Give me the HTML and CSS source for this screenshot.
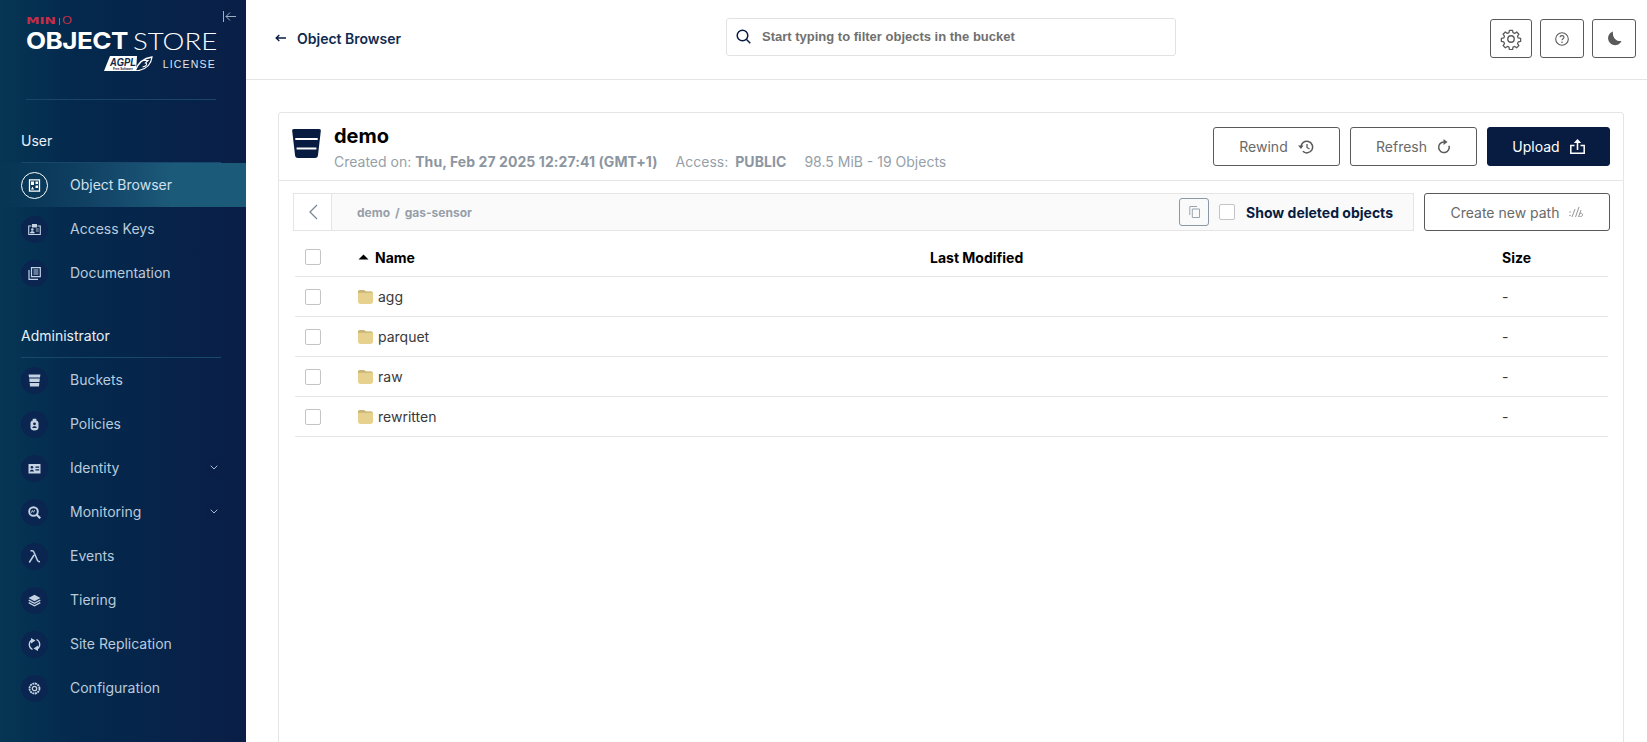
FILE: index.html
```html
<!DOCTYPE html>
<html lang="en">
<head>
<meta charset="utf-8">
<title>MinIO Object Store</title>
<link rel="stylesheet" href="styles.css">
</head>
<body>
<div class="app">
  <aside class="sidebar">
    <div class="brand">
      <svg class="collapse" viewBox="0 0 13 11" width="13" height="11"><path d="M.5 0v11M13 5.500H3M7 1.500l-4 4 4 4" fill="none" stroke="#9fb0c4" stroke-width="1"/></svg>
      <div class="minio"><b>MIN</b><span class="bar"></span><i>O</i></div>
      <div class="product"><b>OBJECT</b><span>STORE</span></div>
      <div class="license">
        <svg class="agpl" viewBox="0 0 49 15" width="49" height="15"><path d="M6 0h27l-1 15H0z" fill="#fff"/><text x="6" y="10" font-family="Liberation Sans" font-size="11.500" font-style="italic" font-weight="700" fill="#0b2547" textLength="26" lengthAdjust="spacingAndGlyphs">AGPL</text><text x="9" y="14" font-family="Liberation Sans" font-size="3" font-weight="700" fill="#0b2547">Free Software</text><path d="M31 15C34 7 40 2 48 1c-1 8-6 13-17 14z" fill="#0b2547" stroke="#fff" stroke-width="1.300"/><path d="M39 4.500h5l-2.500 2.500c2 .5 1.500 3.500-3 4" fill="none" stroke="#fff" stroke-width="1.100"/></svg>
        <span class="lic">LICENSE</span>
      </div>
    </div>
    <div class="section">User</div>
    <nav class="menu">
      <a class="item active"><span class="ic"><svg viewBox="0 0 13 13"><path d="M1.500 .8h10v11.400h-10z" fill="none" stroke="currentColor" stroke-width="1.300"/><path d="M3 2.500h3v3.500H3zM7.500 2.500h2.500V5H7.500zM7.500 6.500h2.500V9H7.500zM3 10.500l1.500-3 1.500 3z" fill="currentColor"/></svg></span>Object Browser</a>
      <a class="item"><span class="ic"><svg viewBox="0 0 13 13"><path d="M3.500 3H.7v8.500h11.600V3H9.500" fill="none" stroke="currentColor" stroke-width="1.100"/><path d="M4 1h5v3.500H4z" fill="currentColor"/><circle cx="4.300" cy="6.500" r="1.300" fill="currentColor"/><path d="M2.300 10c.2-2 3.800-2 4 0zM7.800 6h3M7.800 8h3" fill="currentColor" stroke="currentColor" stroke-width=".8"/></svg></span>Access Keys</a>
      <a class="item"><span class="ic"><svg viewBox="0 0 13 13"><path d="M3.500 .7h8.800v9H3.500z" fill="none" stroke="currentColor" stroke-width="1.200"/><path d="M1 3v9.300h9" fill="none" stroke="currentColor" stroke-width="1.200"/><path d="M5.500 3h4.800M5.500 5h4.800M5.500 7h4.800" stroke="currentColor"/></svg></span>Documentation</a>
    </nav>
    <div class="section">Administrator</div>
    <nav class="menu">
      <a class="item"><span class="ic"><svg viewBox="0 0 13 13"><path d="M.6 .5h11.800l-.4 3H1zM1.200 4.500h10.600l-.3 3.500H1.500zM1.700 9h9.600l-.3 3.500H2z" fill="currentColor"/></svg></span>Buckets</a>
      <a class="item"><span class="ic"><svg viewBox="0 0 13 13"><path d="M4.700 2.500V.8h3.600v1.700c1.500.3 2.200 1.200 2.200 2.700V9.500c0 2-1.500 3-4 3s-4-1-4-3V5.200c0-1.500.7-2.400 2.200-2.700z" fill="currentColor"/><circle cx="6.500" cy="5.800" r="1.400" fill="#0a2550"/><path d="M4.200 10c.3-2.200 4.300-2.200 4.600 0z" fill="#0a2550"/></svg></span>Policies</a>
      <a class="item"><span class="ic"><svg viewBox="0 0 13 13"><path d="M.5 2h12v9.500H.5z" fill="currentColor"/><circle cx="3.900" cy="5.300" r="1.300" fill="#0a2550"/><path d="M1.800 9.500c.2-2.300 4-2.300 4.200 0zM7.500 4.500h3.700v1.200H7.500zM7.500 7.200h3.700v1.200H7.500z" fill="#0a2550"/></svg></span>Identity<span class="chev"><svg viewBox="0 0 8 5" width="8" height="5"><path d="M.7.700L4 4 7.300.7" fill="none" stroke="#a9bbd0" stroke-width="1"/></svg></span></a>
      <a class="item"><span class="ic"><svg viewBox="0 0 13 13"><circle cx="5.500" cy="5.500" r="4.300" fill="none" stroke="currentColor" stroke-width="1.900"/><path d="M8.500 8.500l3.800 3.800" stroke="currentColor" stroke-width="2.200"/><path d="M3.200 6.800l1.200-2.300 1.100 1.800 1.200-2.300" fill="none" stroke="currentColor" stroke-width=".9"/></svg></span>Monitoring<span class="chev"><svg viewBox="0 0 8 5" width="8" height="5"><path d="M.7.700L4 4 7.300.7" fill="none" stroke="#a9bbd0" stroke-width="1"/></svg></span></a>
      <a class="item"><span class="ic"><svg viewBox="0 0 13 13"><path d="M2.500 .8H4c1.200 0 1.700.6 2.100 1.700L9.500 10.500c.3.700.8 1.200 2.500 1.200M6 5L1.300 12.500" fill="none" stroke="currentColor" stroke-width="1.500"/></svg></span>Events</a>
      <a class="item"><span class="ic"><svg viewBox="0 0 13 13"><path d="M6.500.8l6 3.200-6 3.200-6-3.200z" fill="currentColor"/><path d="M.7 6.100l5.800 3.100 5.800-3.100M.7 8.600l5.800 3.100 5.800-3.100" fill="none" stroke="currentColor" stroke-width="1.300"/></svg></span>Tiering</a>
      <a class="item"><span class="ic"><svg viewBox="0 0 13 13"><path d="M4.500 11.500A5.400 5.400 0 0 1 3.500 2.200M8.500 1.500A5.400 5.400 0 0 1 9.500 10.800" fill="none" stroke="currentColor" stroke-width="1.300"/><path d="M3 0l4.500 2.500L3 5.500zM10 13l-4.500-2.500L10 7.500z" fill="currentColor"/></svg></span>Site Replication</a>
      <a class="item"><span class="ic"><svg viewBox="0 0 13 13"><circle cx="6.500" cy="6.500" r="5" fill="none" stroke="currentColor" stroke-width="1.800" stroke-dasharray="2 .6"/><circle cx="6.500" cy="6.500" r="2.200" fill="none" stroke="currentColor" stroke-width="1.300"/></svg></span>Configuration</a>
    </nav>
  </aside>

  <main class="main">
    <header class="topbar">
      <a class="back"><svg viewBox="0 0 11 8" width="11" height="8"><path d="M11 4H1.500M4.300 1L1.200 4l3.100 3" fill="none" stroke="#081c42" stroke-width="1.400"/></svg><span>Object Browser</span></a>
      <div class="search">
        <svg viewBox="0 0 15 15" width="15" height="15"><circle cx="6.500" cy="6.500" r="5.300" fill="none" stroke="#081c42" stroke-width="1.500"/><path d="M10.300 10.300l4 4" stroke="#081c42" stroke-width="1.500"/></svg>
        <span>Start typing to filter objects in the bucket</span>
      </div>
      <div class="tools">
        <button class="tool gear"><svg viewBox="0 0 24 24" width="22" height="22"><path d="M10.300 2.500h3.400l.5 2.600 1.800.8 2.200-1.500 2.400 2.400-1.500 2.200.8 1.800 2.600.5v3.400l-2.600.5-.8 1.800 1.500 2.200-2.400 2.400-2.200-1.500-1.800.8-.5 2.600h-3.400l-.5-2.600-1.800-.8-2.200 1.500-2.400-2.400 1.500-2.200-.8-1.800-2.600-.5v-3.400l2.600-.5.800-1.800-1.500-2.200 2.400-2.400 2.200 1.500 1.800-.8z" fill="none" stroke="#5a5a5a" stroke-width="1.400" stroke-linejoin="round"/><circle cx="12" cy="12" r="3.500" fill="none" stroke="#5a5a5a" stroke-width="1.500"/></svg></button>
        <button class="tool help"><svg viewBox="0 0 14 14" width="14" height="14"><circle cx="7" cy="7" r="6.300" fill="none" stroke="#5a5a5a" stroke-width="1.100"/><path d="M5 5.300C5 3 9 3 9 5.300c0 1.500-2 1.500-2 3" fill="none" stroke="#5a5a5a" stroke-width="1.100"/><circle cx="7" cy="10.200" r=".8" fill="#5a5a5a"/></svg></button>
        <button class="tool moon"><svg viewBox="0 0 15 15" width="15" height="15"><path d="M6 .5A7 7 0 1 0 14.500 10C10 10.800 5 7 6 .5z" fill="#5a5a5a"/></svg></button>
      </div>
    </header>

    <div class="content">
      <section class="bucket">
        <svg class="bucket-ic" viewBox="0 0 29 29" width="29" height="29"><path d="M2 0h25c1.500 0 2 .8 1.800 2L26 26c-.2 1.800-1 3-3 3H6c-2 0-2.800-1.200-3-3L.2 2C0 .8.500 0 2 0z" fill="#081c42"/><path d="M3.300 9h22.400v2H3.300zM4.600 18.500h19.800v2H4.600z" fill="#fff"/></svg>
        <div class="bucket-info">
          <h1>demo</h1>
          <p><span>Created on: <b>Thu, Feb 27 2025 12:27:41 (GMT+1)</b></span><span class="acc">Access: <b>PUBLIC</b></span><span class="size">98.5 MiB - 19 Objects</span></p>
        </div>
        <div class="actions">
          <button class="btn">Rewind<svg viewBox="0 0 16 14" width="16" height="14"><path d="M3 7a5.800 5.800 0 1 1 1.800 4.300" fill="none" stroke="#5a5a5a" stroke-width="1.500"/><path d="M0 5.500h5.500L3 9z" fill="#5a5a5a"/><path d="M9 4v3.500l2.500 1.500" fill="none" stroke="#5a5a5a" stroke-width="1.300"/></svg></button>
          <button class="btn">Refresh<svg viewBox="0 0 14 15" width="14" height="15"><path d="M12 6.700A5.300 5.300 0 1 1 6.800 3" fill="none" stroke="#5a5a5a" stroke-width="1.500"/><path d="M6.500 0l4 3-4 3z" fill="#5a5a5a"/></svg></button>
          <button class="btn primary">Upload<svg viewBox="0 0 15 15" width="15" height="15"><path d="M4.500 6.500H.8v7.700h13.400V6.500h-3.700" fill="none" stroke="#fff" stroke-width="1.500"/><path d="M7.500 2v9" stroke="#fff" stroke-width="1.600"/><path d="M7.500 0L3.800 4h7.400z" fill="#fff"/></svg></button>
        </div>
      </section>

      <section class="browser">
        <div class="pathbar">
          <div class="crumbs">
            <span class="crumb-back"><svg viewBox="0 0 10 16" width="10" height="16"><path d="M9 1L2 8l7 7" fill="none" stroke="#7c8794" stroke-width="1.300"/></svg></span>
            <span class="crumb-text">demo<i>/</i>gas-sensor</span>
            <button class="copy"><svg viewBox="0 0 11 12" width="11" height="12"><path d="M3.300 3h7.200v8.500H3.300z" fill="none" stroke="#9aa5b1"/><path d="M8 .5H.8v8.500" fill="none" stroke="#9aa5b1"/></svg></button>
            <span class="check"></span>
            <span class="deleted">Show deleted objects</span>
          </div>
          <button class="btn newpath">Create new path<svg viewBox="0 0 14 10" width="14" height="10"><path d="M3 10L6 2M6.500 10L10 0M9.500 10L12 3" fill="none" stroke="#8a8a8a" stroke-width=".9"/><circle cx="1" cy="5" r=".7" fill="#8a8a8a"/><circle cx="1" cy="8.500" r=".7" fill="#8a8a8a"/><path d="M10.500 9.500c1.500.5 3-.2 3-1.700s-1.500-2-2.700-1" fill="none" stroke="#8a8a8a" stroke-width=".9"/></svg></button>
        </div>
        <div class="table">
          <div class="row head">
            <span class="check"></span>
            <span class="name"><svg viewBox="0 0 11 6" width="11" height="6"><path d="M5.500.500L10.500 5.500H.5z" fill="#000"/></svg>Name</span>
            <span>Last Modified</span>
            <span>Size</span>
          </div>
          <div class="row"><span class="check"></span><span class="name folder"><svg viewBox="0 0 15 14" width="15" height="14"><path d="M2 0h3.500c1 0 1.500 1 2.500 1.500h4.500c1.500 0 2.500.5 2.500 2v8c0 1.500-1 2.500-2.500 2.500h-10C1 14 0 13 0 11.500V2C0 .8.800 0 2 0z" fill="#e6d28e"/><path d="M0 3.500V2C0 .8.800 0 2 0h3.500c1 0 1.500 1 2.500 1.500h4.500c1 0 2 .5 2.300 1.300H1.500C.7 2.800 0 3.500 0 3.500z" fill="#c9b678"/></svg>agg</span><span></span><span>-</span></div>
          <div class="row"><span class="check"></span><span class="name folder"><svg viewBox="0 0 15 14" width="15" height="14"><path d="M2 0h3.500c1 0 1.500 1 2.500 1.500h4.500c1.500 0 2.500.5 2.500 2v8c0 1.500-1 2.500-2.500 2.500h-10C1 14 0 13 0 11.500V2C0 .8.800 0 2 0z" fill="#e6d28e"/><path d="M0 3.500V2C0 .8.800 0 2 0h3.500c1 0 1.500 1 2.500 1.500h4.500c1 0 2 .5 2.300 1.300H1.500C.7 2.800 0 3.500 0 3.500z" fill="#c9b678"/></svg>parquet</span><span></span><span>-</span></div>
          <div class="row"><span class="check"></span><span class="name folder"><svg viewBox="0 0 15 14" width="15" height="14"><path d="M2 0h3.500c1 0 1.500 1 2.500 1.500h4.500c1.500 0 2.500.5 2.500 2v8c0 1.500-1 2.500-2.500 2.500h-10C1 14 0 13 0 11.500V2C0 .8.800 0 2 0z" fill="#e6d28e"/><path d="M0 3.500V2C0 .8.800 0 2 0h3.500c1 0 1.500 1 2.500 1.500h4.500c1 0 2 .5 2.300 1.300H1.500C.7 2.800 0 3.500 0 3.500z" fill="#c9b678"/></svg>raw</span><span></span><span>-</span></div>
          <div class="row"><span class="check"></span><span class="name folder"><svg viewBox="0 0 15 14" width="15" height="14"><path d="M2 0h3.500c1 0 1.500 1 2.500 1.500h4.500c1.500 0 2.500.5 2.500 2v8c0 1.500-1 2.500-2.500 2.500h-10C1 14 0 13 0 11.500V2C0 .8.800 0 2 0z" fill="#e6d28e"/><path d="M0 3.500V2C0 .8.800 0 2 0h3.500c1 0 1.500 1 2.500 1.500h4.500c1 0 2 .5 2.300 1.300H1.500C.7 2.800 0 3.500 0 3.500z" fill="#c9b678"/></svg>rewritten</span><span></span><span>-</span></div>
        </div>
      </section>
    </div>
  </main>
</div>
</body>
</html>
```
FILE: styles.css
```css
* { box-sizing: border-box; }
html, body { margin: 0; height: 100%; overflow: hidden; }
body { font-family: Inter, "Liberation Sans", sans-serif; color: #000; background: #fff; }
button { font-family: inherit; }

.app { display: flex; height: 742px; overflow: hidden; }

/* Sidebar */
.sidebar {
  width: 246px; flex: none; height: 742px; overflow: hidden;
  background: linear-gradient(90deg, #063654 0%, #04294d 30%, #0a1e46 100%);
  color: #fff;
}
.brand {
  position: relative; height: 100px; margin: 0 30px 0 26px; padding-top: 17px;
  border-bottom: 1px solid #1a4468;
}
.collapse { position: absolute; left: 197px; top: 11px; }
.minio { display: flex; align-items: center; height: 8px; line-height: 8px; color: #c72c48; }
.minio b { display: block; width: 30px; font-family: "DejaVu Sans", sans-serif; font-size: 9.500px; font-weight: 700; transform: scaleX(1.430); transform-origin: left; }
.minio .bar { width: 1px; height: 7px; background: #8b6a80; margin-left: 3px; }
.minio i { display: block; margin-left: 2px; font-family: "Liberation Sans", sans-serif; font-style: normal; font-size: 10px; transform: scaleX(1.280); transform-origin: left; }
.product { display: flex; height: 20px; margin-top: 6px; line-height: 20px; white-space: nowrap; }
.product b { display: block; width: 107px; font-family: Inter, sans-serif; font-weight: 700; font-size: 23.500px; letter-spacing: -.5px; transform: scaleX(1.110); transform-origin: left; }
.product span { display: block; font-family: Lato, "Liberation Sans", sans-serif; font-size: 24px; font-weight: 300; letter-spacing: 0; transform: scaleX(1.150); transform-origin: left; }
.license { display: flex; align-items: center; justify-content: flex-end; gap: 10px; margin-top: 5px; width: 190px; }
.agpl { flex: none; }
.lic { font-family: "Liberation Sans", sans-serif; font-size: 10.500px; letter-spacing: 1.200px; color: #dfe6ee; }

.section {
  margin: 24px 25px 0 21px; height: 39px; padding-top: 8px; font-size: 14px; line-height: 17px; color: #e8f0f8;
  border-bottom: 1px solid #17486c;
}
.menu { display: flex; flex-direction: column; }
.item { display: flex; align-items: center; height: 44px; padding: 0 0 2px 21px; font-size: 14px; color: #b9cbdc; position: relative; }
.item.active { background: linear-gradient(90deg, rgba(28,90,122,0) 0%, #1c5a7a 70%, #1c5a7a 100%); color: #cfe0ee; }
.ic { width: 27px; height: 27px; border-radius: 50%; background: #0a2550; margin: 2px 22px 0 0; display: flex; align-items: center; justify-content: center; color: #c4d2e1; flex: none; }
.ic svg { width: 13px; height: 13px; }
.item.active .ic { background: transparent; border: 1px solid #fff; color: #fff; }
.chev { position: absolute; left: 206px; top: 14px; width: 15px; height: 15px; border-radius: 2px; background: #0a1f48; display: flex; align-items: center; justify-content: center; }

/* Main */
.main { flex: 1; min-width: 0; display: flex; flex-direction: column; }
.topbar { height: 80px; flex: none; border-bottom: 1px solid #e5e5e5; display: flex; align-items: flex-start; padding: 18px 11px 0 29px; }
.back { display: flex; align-items: center; height: 40px; gap: 11px; font-size: 14px; font-weight: 600; color: #0f2b50; width: 451px; flex: none; }
.search { width: 450px; height: 38px; flex: none; border: 1px solid #e2e2e2; border-radius: 3px; display: flex; align-items: center; padding: 0 0 1px 9px; gap: 11px; font-family: "Liberation Sans", sans-serif; font-size: 13px; font-weight: 700; color: #707070; }
.tools { margin-left: auto; display: flex; gap: 8px; margin-top: 1px; }
.tool { height: 39px; width: 44px; padding: 0; background: #fff; border: 1px solid #5a5a5a; border-radius: 3px; display: flex; align-items: center; justify-content: center; }
.tool.gear { width: 42px; }

.content { flex: 1; padding: 32px 23px 0 32px; min-height: 0; }
.bucket { height: 69px; border: 1px solid #e5e5e5; border-radius: 3px 3px 0 0; display: flex; align-items: center; padding: 0 13px; }
.bucket-ic { flex: none; margin: 0 13px 6px 0; }
.bucket-info { flex: 1; }
.bucket-info h1 { margin: 0; font-size: 20px; line-height: 24px; font-weight: 700; color: #000; }
.bucket-info p { margin: 5px 0 0; font-size: 14px; line-height: 17px; color: #969fa9; display: flex; white-space: nowrap; }
.bucket-info b { font-weight: 700; color: #8c96a1; letter-spacing: .08px; }
.acc { margin-left: 18px; }
.acc b { margin-left: 3px; }
.size { margin-left: 18px; }
.actions { display: flex; gap: 10px; }
.btn { display: flex; align-items: center; justify-content: center; gap: 10px; width: 127px; height: 39px; padding: 0; border: 1px solid #5a5a5a; border-radius: 3px; background: #fff; color: #696969; font-size: 14px; }
.btn.primary { background: #081c42; border-color: #081c42; color: #fff; width: 123px; }

.browser { height: 600px; border: 1px solid #e5e5e5; border-top: 0; padding: 12px 13px 0 14px; }
.pathbar { display: flex; gap: 10px; }
.crumbs { flex: 1; height: 38px; border: 1px solid #e5e5e5; background: #fafafa; display: flex; align-items: center; }
.crumb-back { width: 38px; height: 36px; flex: none; background: #fff; border-right: 1px solid #e5e5e5; display: flex; align-items: center; justify-content: center; }
.crumb-text { flex: 1; padding-left: 25px; font-size: 12px; font-weight: 700; color: #969fa9; }
.crumb-text i { font-style: normal; margin: 0 5px; }
.copy { width: 30px; height: 28px; flex: none; padding: 0; background: transparent; border: 1px solid #8a97a5; border-radius: 3px; display: flex; align-items: center; justify-content: center; margin-right: 10px; }
.check { display: block; width: 16px; height: 16px; flex: none; background: #fff; border: 1px solid #c4c4c4; border-radius: 2px; }
.deleted { margin: 0 20px 0 11px; font-size: 14px; font-weight: 700; color: #081c42; white-space: nowrap; }
.btn.newpath { width: 186px; height: 38px; flex: none; }

.table { margin: 0 2px; }
.row { display: grid; grid-template-columns: 53px 572px 572px 1fr; align-items: center; height: 40px; border-bottom: 1px solid #e5e5e5; padding-left: 10px; font-size: 14px; color: #393939; }
.row.head { height: 46px; padding-top: 7px; font-weight: 700; color: #000; }
.name { display: flex; align-items: center; }
.head .name svg { margin-right: 6px; }
.folder svg { margin-right: 5px; }
```
